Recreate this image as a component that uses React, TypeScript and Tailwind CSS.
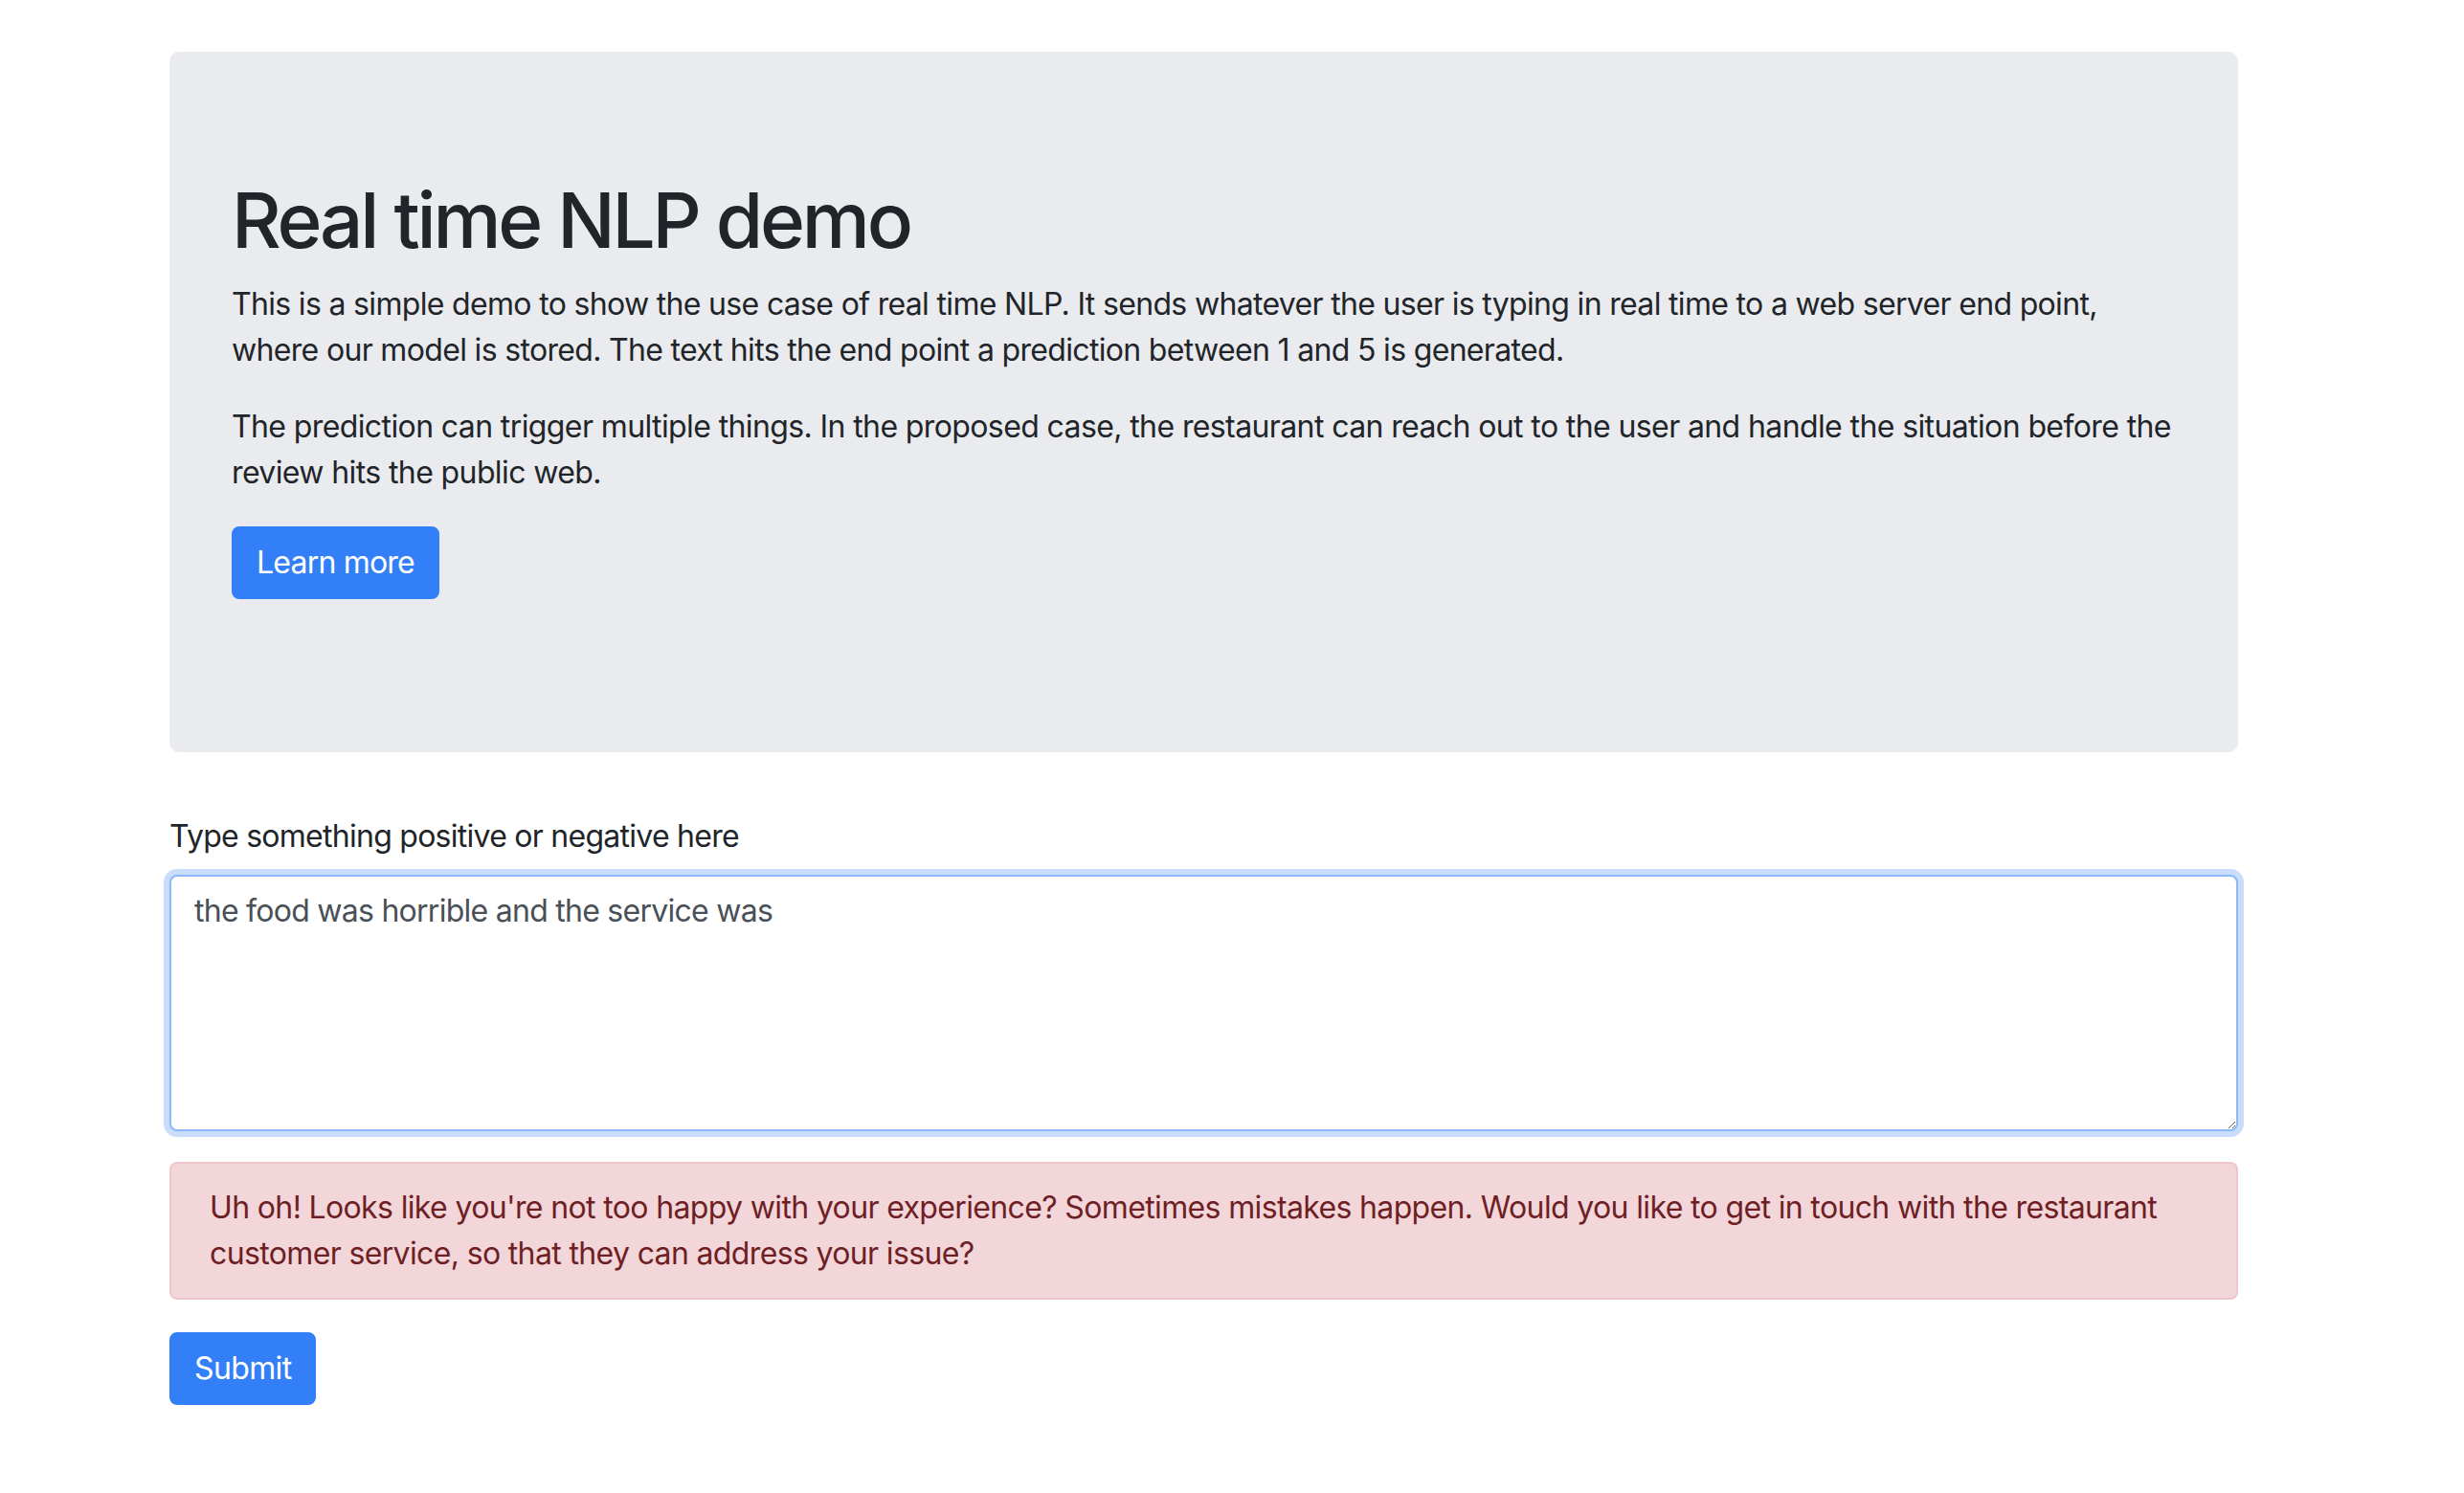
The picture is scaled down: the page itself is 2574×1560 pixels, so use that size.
import React from "react";

export default function App() {
  return (
    <div className="min-h-screen bg-white font-['Inter','Noto_Sans',sans-serif] text-[#212529]">
      <div className="ml-[177px] w-[2161px] pt-[54px] pb-[80px]">
        <div className="mb-[64px] rounded-[10px] bg-[#eaebef] px-[65px] py-[128px]">
          <h1 className="mb-[16px] text-[80px] font-medium leading-[96px] tracking-[-0.04em]">Real time NLP demo</h1>
          <p className="mb-[32px] whitespace-nowrap text-[32px] leading-[48px] tracking-[-0.021em]">
            This is a simple demo to show the use case of real time NLP. It sends whatever the user is typing in real time to a web server end point,
            <br />
            where our model is stored. The text hits the end point a prediction between 1 and 5 is generated.
          </p>
          <p className="mb-[32px] whitespace-nowrap text-[32px] leading-[48px] tracking-[-0.019em]">
            The prediction can trigger multiple things. In the proposed case, the restaurant can reach out to the user and handle the situation before the
            <br />
            review hits the public web.
          </p>
          <p className="mb-[32px] flex">
            <a
              href="#"
              className="inline-block rounded-[8px] border-2 border-[#337ff8] bg-[#337ff8] px-[24px] py-[12px] text-[32px] leading-[48px] tracking-[-0.025em] text-white"
            >
              Learn more
            </a>
          </p>
        </div>

        <form>
          <div className="mb-[32px]">
            <label className="mb-[16px] block text-[32px] leading-[48px] tracking-[-0.023em]">
              Type something positive or negative here
            </label>
            <textarea
              rows={5}
              defaultValue="the food was horrible and the service was "
              className="block h-[268px] w-full rounded-[8px] border-2 border-[#8bb9f9] bg-white px-[24px] py-[12px] text-[32px] leading-[48px] tracking-[-0.023em] text-[#495057] shadow-[0_0_0_6px_#cadcfc] outline-none"
            />
          </div>
          <div className="mb-[34px] whitespace-nowrap rounded-[8px] border-2 border-[#efc6cb] bg-[#f2d6da] px-[40px] py-[22px] text-[32px] leading-[48px] tracking-[-0.02em] text-[#6f1f24]">
            Uh oh! Looks like you're not too happy with your experience? Sometimes mistakes happen. Would you like to get in touch with the restaurant
            <br />
            customer service, so that they can address your issue?
          </div>
          <button
            type="button"
            className="rounded-[8px] border-2 border-[#337ff8] bg-[#337ff8] px-[24px] py-[12px] text-[32px] leading-[48px] tracking-[-0.02em] text-white"
          >
            Submit
          </button>
        </form>
      </div>
    </div>
  );
}
